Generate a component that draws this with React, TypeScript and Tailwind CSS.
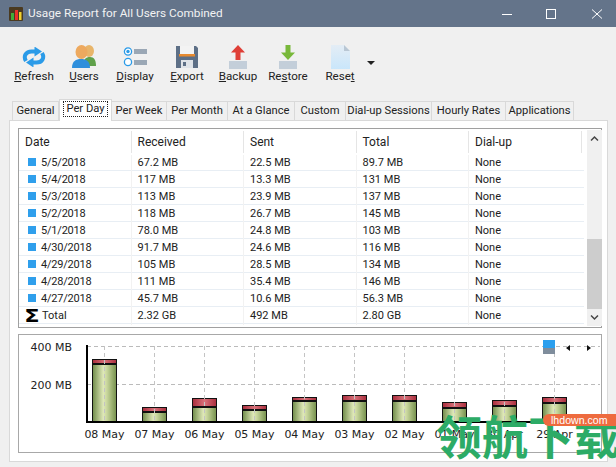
import type { ReactNode } from 'react'

const rows = [
    ['5/5/2018', '67.2 MB', '22.5 MB', '89.7 MB'],
    ['5/4/2018', '117 MB', '13.3 MB', '131 MB'],
    ['5/3/2018', '113 MB', '23.9 MB', '137 MB'],
    ['5/2/2018', '118 MB', '26.7 MB', '145 MB'],
    ['5/1/2018', '78.0 MB', '24.8 MB', '103 MB'],
    ['4/30/2018', '91.7 MB', '24.6 MB', '116 MB'],
    ['4/29/2018', '105 MB', '28.5 MB', '134 MB'],
    ['4/28/2018', '111 MB', '35.4 MB', '146 MB'],
    ['4/27/2018', '45.7 MB', '10.6 MB', '56.3 MB'],
]

const tabs = [
    ['General', 'w-[47px] border-l'],
    ['Per Day', 'w-[53px] border-l'],
    ['Per Week', 'w-[55px]'],
    ['Per Month', 'w-[61px]'],
    ['At a Glance', 'w-[67px]'],
    ['Custom', 'w-[51px]'],
    ['Dial-up Sessions', 'w-[86px]'],
    ['Hourly Rates', 'w-[74px]'],
    ['Applications', 'w-[68px]'],
]

// chart bars: [label, top of red, top of green]
const bars: [string, number, number][] = [
    ['08 May', 359, 363],
    ['07 May', 407, 411],
    ['06 May', 398, 406],
    ['05 May', 405, 409],
    ['04 May', 397, 400],
    ['03 May', 395, 400],
    ['02 May', 395, 400],
    ['01 May', 402, 407],
    ['30 Apr', 400, 405],
    ['29 Apr', 397, 402],
]

function RefreshIcon() {
    return (
        <svg width="24" height="20" viewBox="0 0 24 20" fill="none">
            <path d="M4 14 C1 9 4 4.5 9.5 4.5 L13 4.5" stroke="#2b9be8" strokeWidth="4" />
            <path d="M12.5 -0.5 L20 4.5 L12.5 9.5 Z" fill="#2b9be8" />
            <path d="M20 6 C23 11 20 15.5 14.5 15.5 L11 15.5" stroke="#2b9be8" strokeWidth="4" />
            <path d="M11.5 10.5 L4 15.5 L11.5 20.5 Z" fill="#2b9be8" />
        </svg>
    )
}

function UsersIcon() {
    return (
        <svg width="24" height="23" viewBox="0 0 24 23">
            <ellipse cx="17" cy="6" rx="5" ry="6" fill="#e8b56a" />
            <path d="M11 21 C11 14 14 12 18 12 C22 12 24 15 24 21 Z" fill="#5fa04a" />
            <ellipse cx="9.5" cy="7" rx="6" ry="7" fill="#eda95f" />
            <path d="M0 23 C0 16 4 14 9 14 C14 14 18 16 18 23 Z" fill="#2f8fdc" />
        </svg>
    )
}

function DisplayIcon() {
    return (
        <svg width="24" height="20" viewBox="0 0 24 20">
            <circle cx="5" cy="4.5" r="3.6" fill="#fff" stroke="#2b9be8" strokeWidth="1.3" />
            <circle cx="5" cy="4.5" r="1.7" fill="#2b9be8" />
            <rect x="11" y="2" width="13" height="5" fill="#9aa7b5" />
            <circle cx="5" cy="15" r="3.6" fill="#fff" stroke="#2b9be8" strokeWidth="1.3" />
            <rect x="11" y="13" width="13" height="5" fill="#9aa7b5" />
        </svg>
    )
}

function ExportIcon() {
    return (
        <svg width="22" height="22" viewBox="0 0 22 22">
            <path d="M0 0 H20 L22 2 V22 H0 Z" fill="#5d6f86" />
            <rect x="4" y="0" width="14" height="8" fill="#f3f3f3" />
            <rect x="3" y="8" width="16" height="2.5" fill="#e88a2e" />
            <rect x="5" y="14" width="12" height="8" fill="#dfe3e8" />
            <rect x="7" y="16" width="3" height="4" fill="#5d6f86" />
        </svg>
    )
}

function BackupIcon() {
    return (
        <svg width="18" height="24" viewBox="0 0 18 24">
            <rect x="0" y="16" width="18" height="8" fill="#c3ced9" />
            <path d="M9 0 L16 7.5 H11.5 V15 H6.5 V7.5 H2 Z" fill="#df3f37" />
        </svg>
    )
}

function RestoreIcon() {
    return (
        <svg width="18" height="24" viewBox="0 0 18 24">
            <rect x="0" y="16" width="18" height="8" fill="#c3ced9" />
            <path d="M6.5 0 H11.5 V7.5 H16 L9 15 L2 7.5 H6.5 Z" fill="#78b83a" />
        </svg>
    )
}

function ResetIcon() {
    return (
        <svg width="19" height="24" viewBox="0 0 19 24">
            <defs>
                <linearGradient id="doc" x1="0" y1="0" x2="0" y2="1">
                    <stop offset="0" stopColor="#e4edf5" />
                    <stop offset="1" stopColor="#c9e6fb" />
                </linearGradient>
            </defs>
            <path d="M0 0 H13 L19 6 V24 H0 Z" fill="url(#doc)" />
            <path d="M13 0 L19 6 H13 Z" fill="#b9c7d4" />
        </svg>
    )
}

function ToolButton({ icon, label, w }: { icon: ReactNode; label: ReactNode; w: string }) {
    return (
        <div className={`flex flex-col items-center ${w}`}>
            <div className="h-[25px] flex items-center justify-center">{icon}</div>
            <div className="-mt-px text-[11.6px] leading-[16px] text-[#222]">{label}</div>
        </div>
    )
}

function Chart() {
    return (
        <svg width="582" height="117" viewBox="19 335 582 117" className="block">
            <defs>
                <linearGradient id="green" x1="0" y1="0" x2="1" y2="0">
                    <stop offset="0" stopColor="#6f8b49" />
                    <stop offset="0.45" stopColor="#dfe8b8" />
                    <stop offset="0.6" stopColor="#c8d69c" />
                    <stop offset="1" stopColor="#74904c" />
                </linearGradient>
                <linearGradient id="red" x1="0" y1="0" x2="1" y2="0">
                    <stop offset="0" stopColor="#a92c3c" />
                    <stop offset="0.5" stopColor="#d8717a" />
                    <stop offset="1" stopColor="#a92c3c" />
                </linearGradient>
            </defs>
            <g fontFamily="'DejaVu Sans', sans-serif" fontSize="11" fill="#222">
                <text x="72" y="351" textAnchor="end">400 MB</text>
                <text x="72" y="389" textAnchor="end">200 MB</text>
            </g>
            <path d="M87 346.5 H600 M87 384.5 H600" stroke="#bbb" strokeDasharray="4 3" />
            {bars.map(([label, top, mid], i) => {
                const x = 92 + i * 50
                return (
                    <g key={label}>
                        <rect x={x + 0.5} y={top + 0.5} width="24" height={mid - top} fill="url(#red)" stroke="#111" />
                        <rect x={x + 0.5} y={mid + 0.5} width="24" height={421 - mid} fill="url(#green)" stroke="#111" />
                        <path d={`M${x} ${mid + 1} H${x + 25}`} stroke="#111" strokeWidth="2" />
                    </g>
                )
            })}
            {bars.map((_, i) => {
                const x = 104.5 + i * 50
                return <path key={i} d={`M${x} 346 V421`} stroke="#c4c4c4" strokeDasharray="4 3" />
            })}
            <path d="M87 345 V423 M86 422 H569" stroke="#000" strokeWidth="2" fill="none" />
            <g fontFamily="'DejaVu Sans', sans-serif" fontSize="11" fill="#222">
                {bars.map(([label], i) => (
                    <text key={label} x={104.5 + i * 50} y="438" textAnchor="middle">{label}</text>
                ))}
            </g>
            <rect x="543" y="340" width="12" height="8" fill="#2b9fee" />
            <rect x="543" y="348" width="12" height="6" fill="#7f8d9c" />
            <path d="M570 345 L566 348 L570 351 Z M587 345 L591 348 L587 351 Z" fill="#111" />
        </svg>
    )
}

export default function App() {
    return (
        <div className="relative w-[616px] h-[467px] overflow-hidden bg-[#f0f0f0] font-['Roboto',sans-serif]">
            {/* Title bar */}
            <div className="flex h-[27px] items-center bg-[#64748a] pl-[9px] pr-[13px]">
                <svg width="14" height="14" viewBox="0 0 14 14">
                    <rect width="14" height="14" rx="1" fill="#4a3a20" />
                    <rect x="2" y="6" width="3" height="7" fill="#3fae3a" />
                    <rect x="6" y="3" width="3" height="10" fill="#e9302a" />
                    <rect x="10" y="5" width="2.5" height="8" fill="#f1d22e" />
                </svg>
                <span className="ml-[5px] text-[11.8px] text-[#f2f2f2]">Usage Report for All Users Combined</span>
                <svg width="104" height="12" viewBox="0 0 104 12" className="ml-auto" fill="none" stroke="#fff">
                    <path d="M3 6.5 H13" />
                    <rect x="47.5" y="1.5" width="9" height="9" />
                    <path d="M93 1.5 L103 10.5 M103 1.5 L93 10.5" />
                </svg>
            </div>

            {/* Toolbar */}
            <div className="flex h-[74px] items-start pl-[9px] pt-[17px]">
                <ToolButton w="w-[50px]" icon={<RefreshIcon />} label={<><u>R</u>efresh</>} />
                <ToolButton w="w-[50px]" icon={<UsersIcon />} label={<><u>U</u>sers</>} />
                <ToolButton w="w-[52px]" icon={<DisplayIcon />} label={<><u>D</u>isplay</>} />
                <ToolButton w="w-[52px]" icon={<ExportIcon />} label={<><u>E</u>xport</>} />
                <ToolButton w="w-[50px]" icon={<BackupIcon />} label={<><u>B</u>ackup</>} />
                <ToolButton w="w-[50px]" icon={<RestoreIcon />} label={<>Re<u>s</u>tore</>} />
                <ToolButton w="w-[54px]" icon={<ResetIcon />} label={<>Rese<u>t</u></>} />
                <div className="mt-[17px] h-0 w-0 border-x-[4px] border-t-[4px] border-x-transparent border-t-[#222]" />
            </div>

            {/* Tabs */}
            <div className="flex h-[19px] items-end pl-[12px]">
                {tabs.map(([name, w]) => {
                    const active = name === 'Per Day'
                    return (
                        <div
                            key={name}
                            className={`${w} flex items-center justify-center border-t border-r border-[#d9d9d9] text-[11.2px] whitespace-nowrap text-[#222] ${
                                active ? 'relative z-10 -mb-px h-[22px] bg-white' : 'h-[19px] bg-[#f0f0f0]'
                            }`}
                        >
                            {active ? (
                                <span className="-mt-[3px] border border-dotted border-[#222] px-[2px] leading-[14px]">{name}</span>
                            ) : (
                                name
                            )}
                        </div>
                    )
                })}
            </div>

            {/* Tab panel */}
            <div className="ml-[9px] flex h-[342px] w-[599px] flex-col border border-[#d9d9d9] bg-white pl-[8px] pt-[7px]">
                {/* Usage list */}
                <div className="flex h-[200px] w-[584px] border border-[#a0a0a0] text-[11px] text-[#222]">
                    <div className="w-[565px] shrink-0">
                        <div className="flex h-[25px] items-center text-[12px]">
                            {['Date', 'Received', 'Sent', 'Total', 'Dial-up'].map(h => (
                                <div key={h} className="flex h-[22px] w-[112.5px] items-center border-r border-[#e5e5e5] pl-[6px]">{h}</div>
                            ))}
                        </div>
                        {rows.map(r => (
                            <div key={r[0]} className="flex h-[17px] items-center border-b border-[#e8eef4] pt-[3px]">
                                <div className="flex w-[112.5px] items-center border-r border-[#f2f2f2] pl-[9px]">
                                    <span className="mr-[5px] -mt-[3px] h-[8px] w-[8px] bg-[#2f9fec]" />
                                    <span className="tracking-[-0.2px]">{r[0]}</span>
                                </div>
                                {r.slice(1).map((c, i) => (
                                    <div key={i} className="w-[112.5px] border-r border-[#f2f2f2] pl-[6px]">{c}</div>
                                ))}
                                <div className="w-[112.5px] pl-[6px]">None</div>
                            </div>
                        ))}
                        <div className="flex h-[17px] items-center border-b border-[#e8eef4] pt-[3px]">
                            <div className="flex w-[112.5px] items-center border-r border-[#f2f2f2] pl-[6px]">
                                <span className="mr-[3px] -mt-[2px] w-[14px] scale-x-125 text-center font-['DejaVu_Sans',sans-serif] text-[18px] leading-[14px] font-bold text-black">Σ</span>
                                Total
                            </div>
                            {['2.32 GB', '492 MB', '2.80 GB'].map(c => (
                                <div key={c} className="w-[112.5px] border-r border-[#f2f2f2] pl-[6px]">{c}</div>
                            ))}
                            <div className="w-[112.5px] pl-[6px]">None</div>
                        </div>
                    </div>
                    {/* Scrollbar */}
                    <div className="my-[1px] ml-[3px] flex w-[15px] flex-col items-center justify-between bg-[#f0f0f0]">
                        <svg width="15" height="17" viewBox="0 0 15 17" fill="none" stroke="#444" strokeWidth="1.5">
                            <path d="M4 10.5 L7.5 7 L11 10.5" />
                        </svg>
                        <div className="mt-[92px] h-[71px] w-full bg-[#cdcdcd]" />
                        <svg width="15" height="17" viewBox="0 0 15 17" fill="none" stroke="#444" strokeWidth="1.5">
                            <path d="M4 6.5 L7.5 10 L11 6.5" />
                        </svg>
                    </div>
                </div>
                {/* Chart */}
                <div className="mt-[6px] h-[119px] w-[584px] border border-[#a8a8a8] bg-white">
                    <Chart />
                </div>
            </div>

            {/* Site watermark */}
            <div className="absolute left-[436px] top-[404px] font-['Noto_Sans_CJK_SC',sans-serif] text-[46px] leading-[60px] font-bold whitespace-nowrap text-[#2cab66]">
                领航下载
            </div>
            <div className="absolute left-[543px] top-[414px] h-[12px] w-[80px] rounded-l-[6px] bg-[#ee6b3f] pl-[8px] font-['Liberation_Sans',sans-serif] text-[10.6px] leading-[12px] text-white">
                lhdown.com
            </div>
        </div>
    )
}
